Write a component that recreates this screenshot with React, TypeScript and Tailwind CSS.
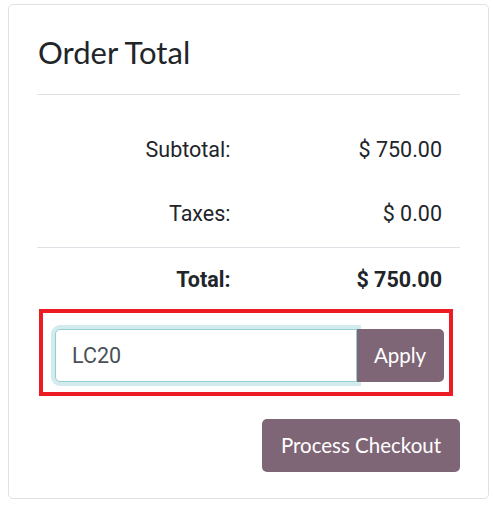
export default function App() {
  const sans = { fontFamily: 'Lato, "Open Sans", sans-serif' };
  const roboto = { fontFamily: 'Roboto, "Liberation Sans", sans-serif' };

  return (
    <div className="w-[493px] h-[506px] bg-white">
      <div className="relative top-[4px] left-[8px] w-[481px] h-[495px] border border-[#dee2e6] rounded-[5px] px-[28px]">
        <h3 style={sans} className="pt-[27px] text-[31px] leading-[40px] text-[#212529] pl-[1px]">
          Order Total
        </h3>
        <hr className="mt-[22px] border-t border-[#dee2e6]" />

        <div style={roboto} className="text-[21.5px] leading-[32px] text-[#212529]">
          <div className="flex mt-[39px]">
            <div className="w-1/2 text-right pr-[18px]">Subtotal:</div>
            <div className="w-1/2 text-right pr-[18px]">$ 750.00</div>
          </div>
          <div className="flex mt-[32px]">
            <div className="w-1/2 text-right pr-[18px]">Taxes:</div>
            <div className="w-1/2 text-right pr-[18px]">$ 0.00</div>
          </div>
          <hr className="mt-[17px] border-t border-[#dee2e6]" />
          <div className="flex mt-[15.5px] font-bold">
            <div className="w-1/2 text-right pr-[18px]">Total:</div>
            <div className="w-1/2 text-right pr-[18px]">$ 750.00</div>
          </div>
        </div>

        <div className="mt-[13.5px] ml-[2px] w-[414px] border-4 border-[#ed1c24] pl-[12px] pr-[5px] pt-[16px] pb-[10px]">
          <div className="flex h-[53px]">
            <input
              readOnly
              value="LC20"
              style={roboto}
              className="flex-1 min-w-0 h-full rounded-l-[5px] border border-[#92d0d4] shadow-[0_0_0_4px_#d3ebed] bg-white pl-[16px] text-[21.5px] text-[#495057] outline-none"
            />
            <button
              style={sans}
              className="h-full w-[87px] rounded-r-[5px] bg-[#7f6677] text-white text-[20.5px] text-center pr-[1px]"
            >
              Apply
            </button>
          </div>
        </div>

        <div className="flex justify-end mt-[23px]">
          <button
            style={sans}
            className="h-[53px] w-[198px] rounded-[5px] bg-[#7f6677] text-white text-[20.5px] text-center"
          >
            Process Checkout
          </button>
        </div>
      </div>
    </div>
  );
}
